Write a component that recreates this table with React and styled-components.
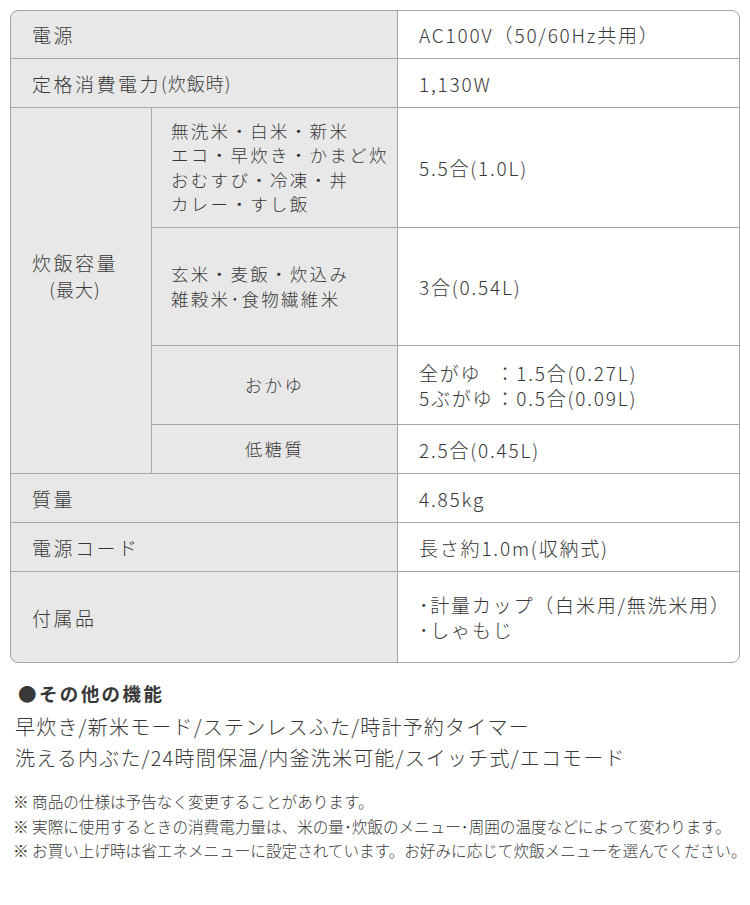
import React from 'react';
import styled, { createGlobalStyle } from 'styled-components';

/*
Spec sheet for the rice cooker: bordered table, feature list and small notes
*/

const GlobalStyle = createGlobalStyle`
  body {
    margin: 0;
    background: #fff;
    color: #383838;
    font-family: 'Noto Sans CJK JP', 'Noto Sans', sans-serif;
    font-weight: 300;
  }
`;

const LINE = '#a6a6a6';

const Page = styled.div`
  width: 750px;
  padding: 10px 0 0 10px;
  box-sizing: border-box;
`;

const Table = styled.div`
  display: grid;
  width: 730px;
  box-sizing: border-box;
  grid-template-columns: 140px 245px 341px;
  grid-template-rows: 47px 48px 119px 117px 78px 48px 48px 48px 90px;
  gap: 1px;
  background: ${LINE};
  border: 1px solid ${LINE};
  border-radius: 8px;
  overflow: hidden;
`;

const Label = styled.div`
  grid-column: span ${p => p.$span || 1};
  grid-row: span ${p => p.$rows || 1};
  background: #e8e8e8;
  display: flex;
  align-items: center;
  padding: 0 0 ${p => p.$lift || 0}px 21px;
  font-size: 19px;
  letter-spacing: 2.5px;
`;

const Small = styled.span`
  font-size: 18px;
  letter-spacing: 1px;
`;

const Stack = styled.div`
  display: flex;
  flex-direction: column;
  align-items: center;
  line-height: 27px;
`;

const Sub = styled.div`
  background: #e8e8e8;
  display: flex;
  align-items: center;
  justify-content: ${p => (p.$center ? 'center' : 'flex-start')};
  padding: ${p => (p.$center ? '0' : '0 0 0 19px')};
  font-size: 17.5px;
  letter-spacing: 2.3px;
  line-height: 24.5px;
`;

const Value = styled.div`
  background: #fff;
  display: flex;
  align-items: center;
  padding-left: 21px;
  font-size: 19px;
  letter-spacing: 1.8px;
  line-height: 25px;
`;

const Lines = styled.div`
  display: flex;
  flex-direction: column;
`;

const Porridge = styled.div`
  display: grid;
  grid-template-columns: auto auto;
  column-gap: 2px;
  line-height: 25px;
`;

const Heading = styled.div`
  margin: 17px 0 0 8px;
  font-size: 18.5px;
  font-weight: 700;
  letter-spacing: 2.4px;
  line-height: 26px;
`;

const Features = styled.div`
  margin: 5px 0 0 5px;
  font-size: 20px;
  letter-spacing: 1.2px;
  line-height: 31px;
`;

const Notes = styled.ul`
  list-style: none;
  margin: 16px 0 0 3px;
  padding: 0;
  font-size: 15.6px;
  line-height: 24.5px;
  letter-spacing: 0;
  white-space: nowrap;
`;

const App = () => (
  <Page>
    <GlobalStyle />
    <Table>
      <Label $span={2}>電源</Label>
      <Value>AC100V（50/60Hz共用）</Value>

      <Label $span={2}>
        定格消費電力<Small>(炊飯時)</Small>
      </Label>
      <Value>1,130W</Value>

      <Label $rows={4} $lift={30}>
        <Stack>
          <span>炊飯容量</span>
          <Small>(最大)</Small>
        </Stack>
      </Label>
      <Sub>
        <Lines>
          <span>無洗米・白米・新米</span>
          <span>エコ・早炊き・かまど炊</span>
          <span>おむすび・冷凍・丼</span>
          <span>カレー・すし飯</span>
        </Lines>
      </Sub>
      <Value>5.5合(1.0L)</Value>

      <Sub>
        <Lines>
          <span>玄米・麦飯・炊込み</span>
          <span>雑穀米･食物繊維米</span>
        </Lines>
      </Sub>
      <Value>3合(0.54L)</Value>

      <Sub $center>おかゆ</Sub>
      <Value>
        <Porridge>
          <span>全がゆ</span>
          <span>：1.5合(0.27L)</span>
          <span>5ぶがゆ</span>
          <span>：0.5合(0.09L)</span>
        </Porridge>
      </Value>

      <Sub $center>低糖質</Sub>
      <Value>2.5合(0.45L)</Value>

      <Label $span={2}>質量</Label>
      <Value>4.85kg</Value>

      <Label $span={2}>電源コード</Label>
      <Value>長さ約1.0m(収納式)</Value>

      <Label $span={2}>付属品</Label>
      <Value>
        <Lines>
          <span>･計量カップ（白米用/無洗米用）</span>
          <span>･しゃもじ</span>
        </Lines>
      </Value>
    </Table>

    <Heading>●その他の機能</Heading>
    <Features>
      <div>早炊き/新米モード/ステンレスふた/時計予約タイマー</div>
      <div>洗える内ぶた/24時間保温/内釜洗米可能/スイッチ式/エコモード</div>
    </Features>

    <Notes>
      <li>※ 商品の仕様は予告なく変更することがあります。</li>
      <li>※ 実際に使用するときの消費電力量は、米の量･炊飯のメニュー･周囲の温度などによって変わります。</li>
      <li>※ お買い上げ時は省エネメニューに設定されています。お好みに応じて炊飯メニューを選んでください。</li>
    </Notes>
  </Page>
);

export default App;
